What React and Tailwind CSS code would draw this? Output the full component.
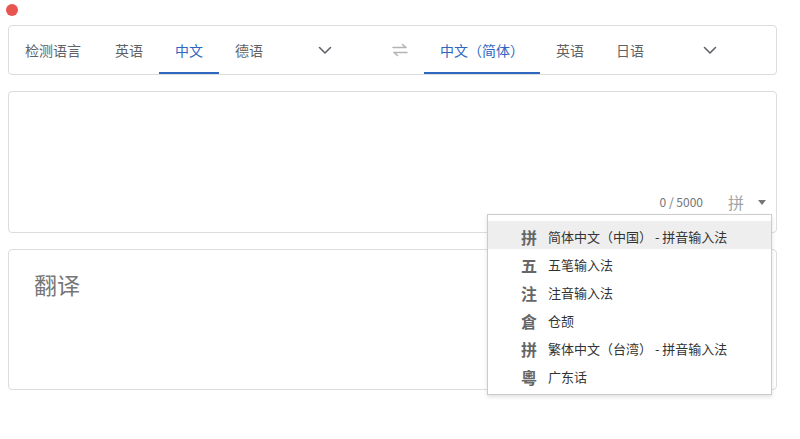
import React from 'react';

const FONT = { fontFamily: '"Noto Sans CJK SC", "Noto Sans", sans-serif' };

const Chevron = () => (
  <svg width="16" height="16" viewBox="0 0 16 16" fill="none" stroke="#5f6368" strokeWidth="1.6" strokeLinecap="round" strokeLinejoin="round">
    <path d="M2.5 5.5 8 11l5.5-5.5" />
  </svg>
);

const SwapIcon = () => (
  <svg width="18" height="14" viewBox="0 0 18 14" fill="none" stroke="#b4b4b4" strokeWidth="1.6" strokeLinecap="round" strokeLinejoin="round">
    <path d="M2 4.5h13M11.5 1.5l3.5 3" />
    <path d="M16 9.5H3M6.5 12.5 3 9.5" />
  </svg>
);

const Tab = ({ label, active, wide }) => (
  <div className={`relative h-full flex items-center pl-4 ${wide ? 'pr-[18px]' : 'pr-4'} text-[14px] ${active ? 'text-[#2f67c0]' : 'text-[#5f6368]'}`}>
    {label}
    {active && <div className="absolute left-0 right-0 bottom-0 h-[2px] bg-[#2f67c0]" />}
  </div>
);

const methods = [
  { icon: '拼', label: '简体中文（中国） - 拼音输入法' },
  { icon: '五', label: '五笔输入法' },
  { icon: '注', label: '注音输入法' },
  { icon: '倉', label: '仓颉' },
  { icon: '拼', label: '繁体中文（台湾） - 拼音输入法' },
  { icon: '粵', label: '广东话' },
];

export default function App() {
  return (
    <div className="relative w-[800px] h-[439px] bg-white overflow-hidden" style={FONT}>
      {/* window close dot */}
      <div className="absolute left-[6px] top-[4px] w-[12px] h-[12px] rounded-full bg-[#e8544f]" />

      <div className="pt-[25px] px-[8px] flex flex-col gap-[16px] w-[785px]">
        {/* language bar */}
        <div className="h-[50px] border border-[#dadce0] rounded-[4px] flex items-stretch">
          <div className="w-[371px] flex items-stretch">
            <Tab label="检测语言" wide />
            <Tab label="英语" />
            <Tab label="中文" active />
            <Tab label="德语" />
            <div className="ml-[22px] w-[48px] flex items-center justify-center">
              <Chevron />
            </div>
          </div>
          <div className="w-[40px] flex items-center justify-center">
            <SwapIcon />
          </div>
          <div className="flex-1 pl-[4px] flex items-stretch">
            <Tab label="中文（简体）" active />
            <Tab label="英语" />
            <Tab label="日语" />
            <div className="ml-[26px] w-[48px] flex items-center justify-center">
              <Chevron />
            </div>
          </div>
        </div>

        {/* source box */}
        <div className="h-[142px] border border-[#dadce0] rounded-[4px] flex flex-col justify-end pb-[18px]">
          <div className="flex items-center justify-end pr-[10px]">
            <span className="text-[12px] text-[#70757a]">0 / 5000</span>
            <span className="ml-[25px] text-[16px] text-[#a0a4a8]">拼</span>
            <span className="ml-[14px] w-0 h-0 border-l-[4px] border-r-[4px] border-t-[5px] border-l-transparent border-r-transparent border-t-[#777]" />
          </div>
        </div>

        {/* target box */}
        <div className="h-[141px] border border-[#dadce0] rounded-[4px] pl-[25px] pt-[17px]">
          <span className="text-[23px] text-[#777]">翻译</span>
        </div>
      </div>

      {/* input method menu */}
      <div className="absolute left-[487px] top-[214px] w-[285px] bg-white border border-[#cccccc] shadow-[0_2px_4px_rgba(0,0,0,0.12)] pt-[6px] pb-[5px]">
        {methods.map((m, i) => (
          <div key={i} className={`h-[28px] flex items-center pl-[33px] pt-[4px] ${i === 0 ? 'bg-[#eeeeee]' : ''}`}>
            <span className="w-[16px] text-[16px] font-bold text-[#666] leading-none">{m.icon}</span>
            <span className="ml-[11px] text-[13px] text-[#333]">{m.label}</span>
          </div>
        ))}
      </div>
    </div>
  );
}
